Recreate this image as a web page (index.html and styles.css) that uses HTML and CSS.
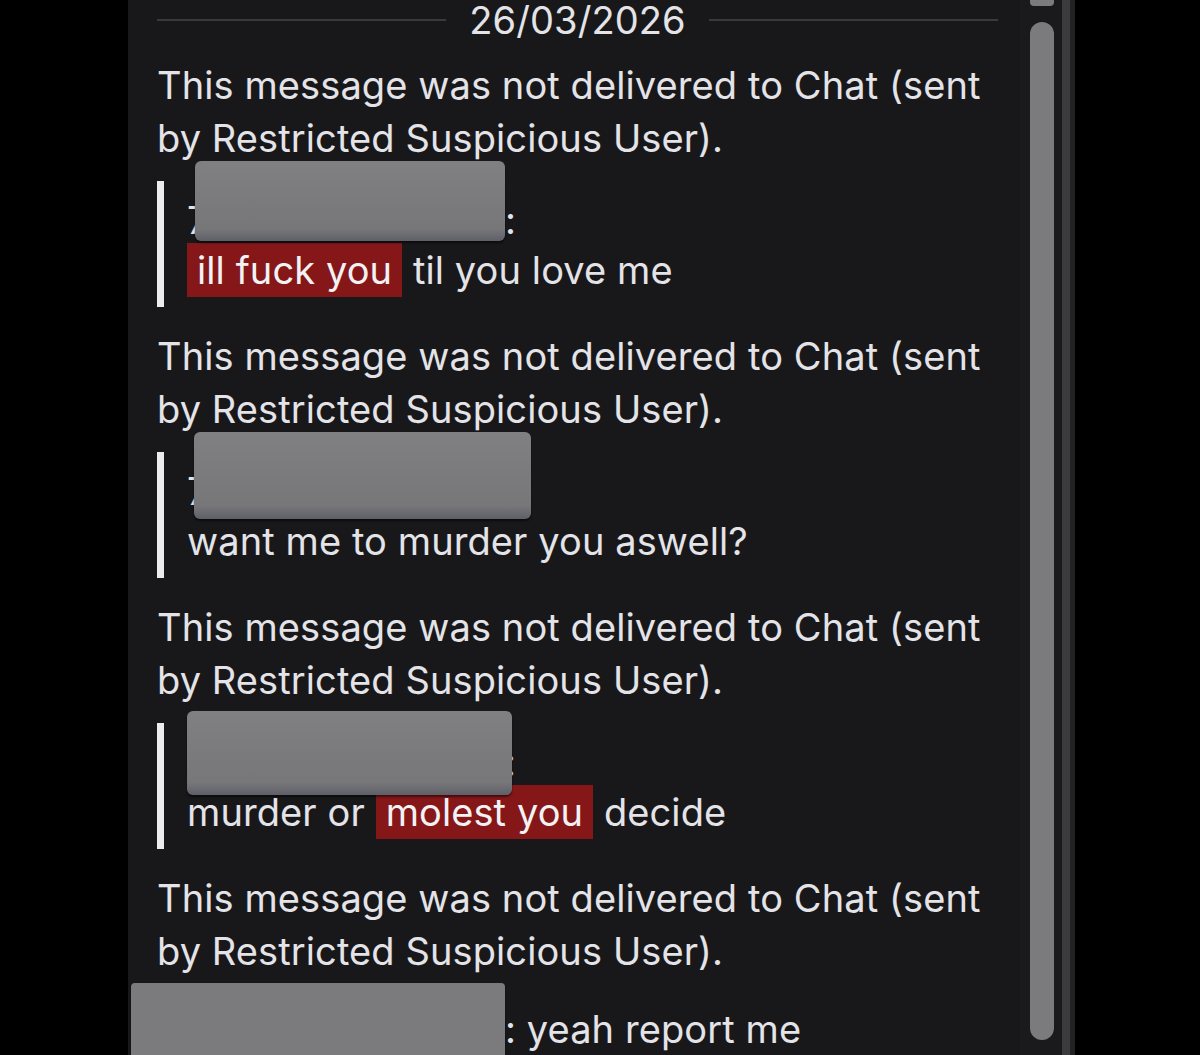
FILE: index.html
```html
<!DOCTYPE html>
<html lang="en">
<head>
    <meta charset="UTF-8">
    <title>Chat</title>
    <link rel="stylesheet" href="styles.css">
</head>
<body>
    <div class="panel">
        <div class="chat">
            <div class="date-divider">
                <span class="rule"></span>
                <span class="date">26/03/2026</span>
                <span class="rule"></span>
            </div>

            <!-- withheld message 1 -->
            <div class="notice">This message was not delivered to Chat (sent by Restricted Suspicious User).</div>
            <div class="quote">
                <div class="redact redact-1"></div>
                <div class="user"><span class="name name-1">7zzzzzzzzzzz</span>:</div>
                <div class="msg"><span class="flag">ill fuck you</span> til you love me</div>
            </div>

            <!-- withheld message 2 -->
            <div class="notice">This message was not delivered to Chat (sent by Restricted Suspicious User).</div>
            <div class="quote">
                <div class="redact redact-2"></div>
                <div class="user"><span class="name name-2">7zzzzzzzzzzzz</span>:</div>
                <div class="msg">want me to murder you aswell?</div>
            </div>

            <!-- withheld message 3 -->
            <div class="notice">This message was not delivered to Chat (sent by Restricted Suspicious User).</div>
            <div class="quote">
                <div class="redact redact-3"></div>
                <div class="user"><span class="name name-3">7zzzzzzzzzzz</span>:</div>
                <div class="msg">murder or <span class="flag">molest you</span> decide</div>
            </div>

            <!-- withheld message 4 -->
            <div class="notice">This message was not delivered to Chat (sent by Restricted Suspicious User).</div>
            <div class="line">
                <div class="redact redact-4"></div>
                <span class="name name-4">7zzzzzzzzzzz</span>: yeah report me
            </div>
        </div>

        <div class="scrollbar">
            <div class="arrow"></div>
            <div class="thumb"></div>
        </div>
        <div class="edge"></div>
    </div>
</body>
</html>
```

FILE: styles.css
```css
html, body {
    margin: 0;
    padding: 0;
    background: #000;
    height: 100%;
    overflow: hidden;
}

body {
    font-family: Inter, 'Noto Sans', sans-serif;
    color: #e4e4e8;
}

.panel {
    margin-left: 128px;
    width: 947px;
    height: 1055px;
    background: #18181b;
    display: flex;
    overflow: hidden;
}

/* chat column */
.chat {
    width: 841px;
    flex-shrink: 0;
    padding: 0 22px 0 29px;
    font-size: 38px;
    line-height: 53px;
    letter-spacing: 0.1px;
}

.date-divider {
    display: flex;
    align-items: center;
    gap: 23px;
    height: 40px;
    margin-bottom: 19px;
}

    .date-divider .rule {
        flex: 1;
        height: 2px;
        background: #3a3a3e;
    }

    .date-divider .date {
        line-height: 44px;
    }

.notice {
    margin-bottom: 16px;
}

.quote {
    position: relative;
    border-left: 7px solid #ececef;
    padding: 14px 0 12px 23px;
    line-height: 50px;
    margin-bottom: 23px;
}

.name {
    display: inline-block;
    overflow: hidden;
    white-space: nowrap;
    vertical-align: top;
}

.name-1 { width: 318px; }
.name-2 { width: 335px; }
.name-3 { width: 318px; }
.name-4 { width: 348px; }

/* flagged words: padding on an inline span so the line height is kept */
.flag {
    background: #851719;
    color: #f2f2f4;
    padding: 4px 10px;
}

.line {
    position: relative;
    margin-top: 25px;
}

/* redaction boxes laid over the user names */
.redact {
    position: absolute;
    background: linear-gradient(#808083, #77777a 85%, #5f6068);
    border-radius: 6px;
    box-shadow: 0 2px 2px rgba(0,0,0,0.5);
    z-index: 2;
}

.redact-1 { left: 31px; top: -20px; width: 310px; height: 80px; }
.redact-2 { left: 30px; top: -20px; width: 337px; height: 87px; }
.redact-3 { left: 23px; top: -12px; width: 325px; height: 84px; }
.redact-4 { left: -26px; top: -20px; width: 374px; height: 90px; border-radius: 4px 4px 0 0; background: #7b7b7e; }

/* scrollbar */
.scrollbar {
    position: relative;
    width: 42px;
    flex-shrink: 0;
    background: #1a1a1d;
}

    .scrollbar .arrow {
        position: absolute;
        left: 10px;
        top: 0;
        width: 24px;
        height: 6px;
        background: #7b7b7e;
        border-radius: 0 0 4px 4px;
    }

    .scrollbar .thumb {
        position: absolute;
        left: 10px;
        top: 22px;
        width: 24px;
        height: 1018px;
        background: #7b7b7e;
        border-radius: 12px;
    }

.edge {
    width: 8px;
    flex-shrink: 0;
    background: #3b3b3f;
    border-right: 5px solid #222225;
}
```
